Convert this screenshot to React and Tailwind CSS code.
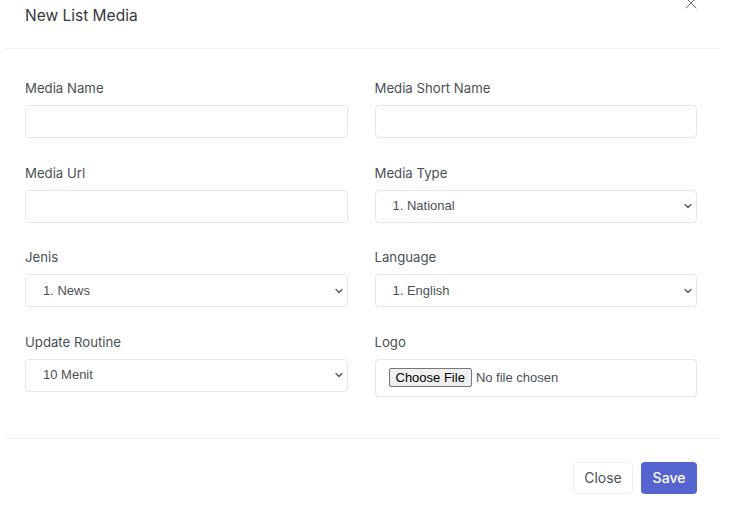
import { ChevronDown, X } from "lucide-react"

const font = { fontFamily: "Inter, 'Noto Sans', sans-serif" }

function Label({ children }) {
	return <div className="h-5 text-[13.2px] leading-5 text-[#495057]">{children}</div>
}

function TextInput() {
	return <div className="mt-[7px] h-[33px] rounded border border-[#e5e8eb] bg-white" />
}

function Select({ value }) {
	return (
		<div className="mt-[7px] flex h-[33px] items-center justify-between rounded border border-[#e5e8eb] bg-white pl-[17px] pr-[2px]">
			<span className="font-['Liberation_Sans',Arial,sans-serif] text-[13px] text-[#495057]">{value}</span>
			<ChevronDown className="h-[12px] w-[12px] text-[#555]" strokeWidth={2.5} />
		</div>
	)
}

function FileInput() {
	return (
		<div className="mt-[7px] flex h-[38px] items-center rounded border border-[#e5e8eb] bg-white pl-[13px] font-['Liberation_Sans',Arial,sans-serif] text-[13px] text-[#495057]">
			<span className="flex h-[19px] items-center rounded-[2px] border border-[#767676] bg-[#efefef] px-[6px] text-black">
				Choose File
			</span>
			<span className="ml-[4px]">No file chosen</span>
		</div>
	)
}

export default function App() {
	return (
		<div className="h-[507px] w-[729px] overflow-hidden bg-white" style={font}>
			<div className="ml-[5px] w-[715px]">
				{/* header */}
				<div className="relative flex h-[49px] border-b border-[#eff1f3] pl-5">
					<h5 className="mt-[5px] text-[15.5px] leading-[22px] text-[#343a40]">New List Media</h5>
					<X className="absolute right-[19px] top-[-7px] h-[20px] w-[20px] text-[#6c757d]" strokeWidth={1.2} />
				</div>

				{/* body */}
				<div className="grid grid-cols-2 gap-x-[27px] gap-y-[24.5px] pl-5 pr-[23px] pt-[29px] pb-[41px]">
					<div>
						<Label>Media Name</Label>
						<TextInput />
					</div>
					<div>
						<Label>Media Short Name</Label>
						<TextInput />
					</div>
					<div>
						<Label>Media Url</Label>
						<TextInput />
					</div>
					<div>
						<Label>Media Type</Label>
						<Select value="1. National" />
					</div>
					<div>
						<Label>Jenis</Label>
						<Select value="1. News" />
					</div>
					<div>
						<Label>Language</Label>
						<Select value="1. English" />
					</div>
					<div>
						<Label>Update Routine</Label>
						<Select value="10 Menit" />
					</div>
					<div>
						<Label>Logo</Label>
						<FileInput />
					</div>
				</div>

				{/* footer */}
				<div className="flex justify-end gap-2 border-t border-[#eff1f3] pr-[23px] pt-[23px]">
					<button className="h-[32px] w-[60px] rounded border border-[#eceff1] bg-white text-[14px] text-[#495057]">Close</button>
					<button className="h-[32px] w-[56px] rounded bg-[#5664d2] text-[14px] font-medium text-white">Save</button>
				</div>
			</div>
		</div>
	)
}
